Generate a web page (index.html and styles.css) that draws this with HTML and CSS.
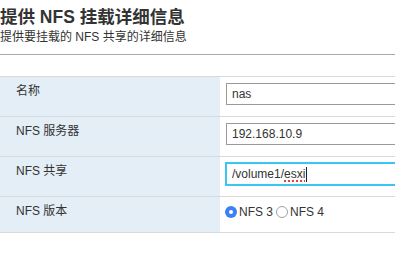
FILE: index.html
```html
<!DOCTYPE html>
<html lang="zh-CN">
<head>
<meta charset="utf-8">
<title>NFS</title>
<link rel="stylesheet" href="styles.css">
</head>
<body>
<div class="page">
  <div class="header">
    <div class="title">提供 NFS 挂载详细信息</div>
    <div class="subtitle">提供要挂载的 NFS 共享的详细信息</div>
  </div>
  <div class="form">
    <div class="row">
      <div class="label">名称</div>
      <div class="value"><div class="field">nas</div></div>
    </div>
    <div class="row">
      <div class="label">NFS 服务器</div>
      <div class="value"><div class="field">192.168.10.9</div></div>
    </div>
    <div class="row">
      <div class="label">NFS 共享</div>
      <div class="value"><div class="field focused">/volume1/<span class="misspelled">esxi</span><span class="caret"></span></div></div>
    </div>
    <div class="row short">
      <div class="label">NFS 版本</div>
      <div class="value radios">
        <span class="radio checked"></span><span class="radio-label">NFS 3</span>
        <span class="radio"></span><span class="radio-label">NFS 4</span>
      </div>
    </div>
  </div>
</div>
</body>
</html>
```
FILE: styles.css
```css
html, body {
  margin: 0;
  padding: 0;
  background: #fff;
  overflow: hidden;
}
body {
  font-family: "Liberation Sans", "Noto Sans CJK SC", sans-serif;
  color: #333;
}
.page {
  width: 395px;
}
.header {
  padding-top: 7px;
  padding-bottom: 10px;
  border-bottom: 1px solid #a8a8a8;
}
.title {
  font-size: 17.5px;
  line-height: 20px;
  font-weight: bold;
  color: #333;
}
.subtitle {
  margin-top: 3px;
  font-size: 12px;
  line-height: 14px;
  color: #333;
}
.form {
  margin-top: 21px;
  border-bottom: 1px solid #d9d9d9;
}
.row {
  display: grid;
  grid-template-columns: 220px 1fr;
  border-top: 1px solid #d9d9d9;
  height: 39px;
}
.row.short {
  height: 35px;
}
.label {
  background: #e3eef6;
  padding: 7px 16px 0;
  font-size: 12px;
  line-height: 14px;
  color: #333;
}
.value {
  padding: 6px 0 0 6px;
  overflow: hidden;
}
.field {
  box-sizing: border-box;
  width: 260px;
  height: 22px;
  border: 1px solid #9a9a9a;
  padding: 0 5px;
  font-size: 12px;
  line-height: 20px;
  color: #333;
  white-space: nowrap;
  display: flex;
  align-items: center;
}
.field.focused {
  border: 2px solid #3ac6f3;
  height: 24px;
  margin: -1px 0 0 -1px;
  width: 262px;
}
.misspelled {
  text-decoration: underline dotted #e5403a;
  text-decoration-thickness: 2px;
  text-underline-offset: 2px;
}
.caret {
  display: inline-block;
  width: 1px;
  height: 15px;
  background: #222;
  margin-left: 1px;
}
.radios {
  display: flex;
  align-items: center;
  padding: 2px 0 0 5px;
  height: 26px;
  font-size: 12px;
  line-height: 14px;
}
.radio {
  box-sizing: border-box;
  width: 12px;
  height: 12px;
  border-radius: 50%;
  border: 1px solid #a2a2a2;
  background: #fff;
  position: relative;
  flex: none;
}
.radio.checked {
  border: none;
  background: #3b80f6;
}
.radio.checked::after {
  content: "";
  position: absolute;
  left: 4px;
  top: 4px;
  width: 4px;
  height: 4px;
  border-radius: 50%;
  background: #fff;
}
.radio-label {
  margin-left: 2px;
  margin-right: 3px;
  color: #333;
}
```
